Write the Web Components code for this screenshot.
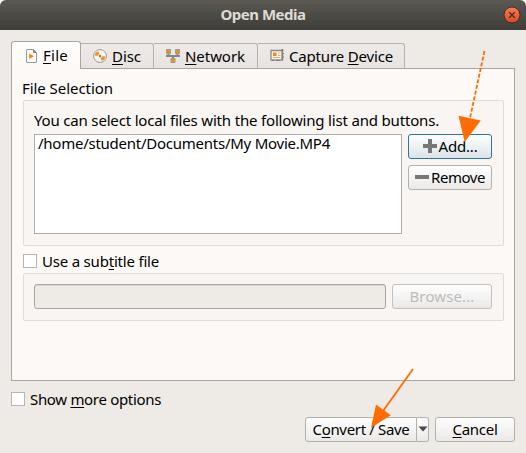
<!DOCTYPE html>
<html lang="en"><head><meta charset="utf-8"><title>Open Media</title>
<style>html,body{margin:0;width:526px;height:453px;overflow:hidden;background:#fff}</style></head>
<body><media-dialog></media-dialog>
<script>
const define=(name,html,init)=>customElements.define(name,class extends HTMLElement{
  connectedCallback(){ if(this.shadowRoot)return; const r=this.attachShadow({mode:'open'}); r.innerHTML=html; if(init)init.call(this,r); }
});

// Label whose letter spacing is adjusted so that it takes the given width.
define('fit-text',`<style>
:host{display:block;flex:none;white-space:pre;height:20px;line-height:20px}
span{display:inline-block;white-space:pre}
::slotted(u){text-decoration:underline;text-decoration-thickness:1px;text-underline-offset:2px;text-decoration-skip-ink:none}
</style><span><slot></slot></span>`,function(r){
  const s=r.querySelector('span'),w=+this.getAttribute('w');
  this.style.width=w+'px';
  const fit=()=>{s.style.letterSpacing='0px';const n=this.textContent.length;s.style.letterSpacing=((w-s.getBoundingClientRect().width)/n)+'px';};
  fit();
});

define('title-bar',`<style>
:host{box-sizing:border-box;height:30px;display:grid;grid-template-columns:1fr auto 1fr;align-items:center;background:linear-gradient(#5b574f,#595750 5%,#3e3d38);border-radius:6px 6px 0 0;color:#dfdbd2;font-weight:700}
svg{justify-self:end;margin-right:5px}
fit-text{grid-column:2;margin-bottom:2px}
</style><fit-text w="85">Open Media</fit-text>
<svg width="18" height="18" viewBox="0 0 18 18"><defs><linearGradient id="g" x2="0" y2="1"><stop stop-color="#f37d57"/><stop offset="1" stop-color="#e0491a"/></linearGradient></defs><circle cx="9" cy="9" r="8" fill="url(#g)" stroke="#35332e"/><path d="M6.3 6.3l5.4 5.4M11.7 6.3l-5.4 5.4" stroke="#45301f" stroke-width="1.3"/></svg>`);

const ICONS={
 file:'<path d="M2 1.5h6.500l3 3v9.500q0 .5-.5.5H2q-.5 0-.5-.5V2q0-.5.5-.5z" fill="#fafafa" stroke="#999"/><path d="M8 1v4h4z" fill="#888"/><path d="M4.200 5.500v5.500L9 8.300z" fill="#f8870c"/>',
 disc:'<circle cx="7" cy="8" r="6.4" fill="#f4f4f4" stroke="#999"/><path d="M7 8L1.800 7.500A5.200 5.200 0 0 1 5.300 3.200zM7 8l5.200.5a5.200 5.200 0 0 1-3.500 4.300z" fill="#f8900c"/><circle cx="7" cy="8" r="2.100" fill="#f4f4f4"/><circle cx="7" cy="8" r="1.200" fill="#777"/>',
 net:'<path d="M0 8h14M2.500 5v3M11.500 5v3M7 8v3" stroke="#858585" stroke-width="2"/><path d="M.5 1.500h4v4h-4zM9.500 1.500h4v4h-4zM5 10.500h4v4H5z" fill="#f8900c" stroke="#999"/>',
 cap:'<path d="M1 2.500h11v9.500H1z" fill="#f8f8f8" stroke="#898989" stroke-width="1.300"/><path d="M11 2h2.500M12.600 1v11.500M12 5.500h2M12 9h2M2 12.500h2M6 12.500h4" stroke="#808080" stroke-width="1.200"/><path d="M3 4.500h3.500V8H3z" fill="#f8870c"/><path d="M8 5h2.500M8 7.500h2.500M3 9.500h7.500" stroke="#f3aa58"/>'
};
define('media-tab',`<style>
:host{box-sizing:border-box;display:flex;align-items:center;height:26px;border:1px solid #b6b3af;border-left:0;border-bottom-color:#a9a5a1;border-radius:0 3px 0 0;background:linear-gradient(#edeae8,#e6e3e1)}
:host([active]){height:28px;border:1px solid #a9a5a1;border-bottom:0;border-radius:3px 3px 0 0;background:linear-gradient(#fff,#fdf9f6);z-index:1}
svg{flex:none;margin-right:5px}
:host([active]) svg{margin-right:4px}
:host([active]) ::slotted(fit-text){margin-bottom:2px}
</style><svg width="14" height="16" viewBox="0 0 14 16"></svg><slot></slot>`,function(r){
 r.querySelector('svg').innerHTML=ICONS[this.getAttribute('icon')];
});

define('push-button',`<style>
:host{box-sizing:border-box;height:25px;display:flex;align-items:center;justify-content:center;border:1px solid #b4b1ad;border-radius:3px;background:linear-gradient(#fefefe,#ebe9e8)}
:host([focus]){border-color:#2e7599;background:linear-gradient(#fdfefe,#dce4e9)}
:host([disabled]){color:#bdbbb9;border-color:#c3c0bd}
::slotted(fit-text){margin-bottom:2px}
::slotted(svg){margin-bottom:1px}
</style><slot></slot>`);

define('check-box',`<style>
:host{display:flex;align-items:center;gap:5px;height:20px}
i{box-sizing:border-box;width:14px;height:14px;border:1px solid #b8b5b0;background:#fff}
</style><i></i><slot></slot>`);

define('group-frame',`<style>
:host{box-sizing:border-box;display:flex;flex-direction:column;border:1px solid #dfdcd9;border-radius:2px;background:#f9f5f2;padding:10px 11px 0 10px}
</style><slot></slot>`);

define('pointer-arrows',`<style>:host{position:absolute;inset:0;pointer-events:none}</style>
<svg width="526" height="453"><g stroke="#ff6c00" stroke-width="1.8"><path d="M484.500 51L470 118" stroke-dasharray="4 1.800"/><path d="M413 369L383 411"/></g><path d="M458.500 115.700L480.700 120.500L464.700 142zM376 404.500L390.800 415.300L371 427.800z" fill="#ff6c00"/></svg>`);

define('media-dialog',`<style>
:host{position:relative;display:flex;flex-direction:column;width:526px;height:453px;background:#eeebe6;border-radius:6px 6px 0 0;font:15px "Noto Sans","Open Sans",sans-serif;color:#000}
.tabs{display:flex;align-items:flex-end;height:29px;padding:10px 11px 0;margin-bottom:-1px}
.panel{box-sizing:border-box;height:313px;margin:0 11px;border:1px solid #a9a5a1;background:#fdf9f6;padding:9px 10px 0 11px;display:flex;flex-direction:column}
.row{display:flex;gap:6px}
.col{display:flex;flex-direction:column;gap:6px;width:84px}
.list{box-sizing:border-box;width:368px;height:100px;border:1px solid #b0aeac;background:#fff;padding:0 3px}
.list fit-text{margin-top:-2px}
.input{box-sizing:border-box;width:352px;height:25px;border:1px solid #aaa7a3;border-radius:3px;background:#eeebe6;box-shadow:inset 0 1px #dbd8d4}
.foot{display:flex;padding:0 11px 0 305px;margin-top:8px}
</style>
<title-bar></title-bar>
<div class="tabs">
<media-tab active icon="file" style="width:70px;padding-left:13px"><fit-text w="25"><u>F</u>ile</fit-text></media-tab>
<media-tab icon="disc" style="width:73px;padding-left:12px"><fit-text w="29"><u>D</u>isc</fit-text></media-tab>
<media-tab icon="net" style="width:104px;padding-left:12px"><fit-text w="60"><u>N</u>etwork</fit-text></media-tab>
<media-tab icon="cap" style="width:147px;padding-left:12px"><fit-text w="104">Capture <u>D</u>evice</fit-text></media-tab>
</div>
<div class="panel">
 <fit-text w="91" style="margin-left:-1px">File Selection</fit-text>
 <group-frame style="height:146px;margin-top:2px;padding-top:9px">
  <fit-text w="405">You can select local files with the following list and buttons.</fit-text>
  <div class="row" style="margin-top:4px"><div class="list"><fit-text w="292">/home/student/Documents/My Movie.MP4</fit-text></div>
  <div class="col">
   <push-button focus><svg width="14" height="14" style="margin-right:2px"><path d="M7 0v14M0 7h14" stroke="#777" stroke-width="4"/></svg><fit-text w="39">Add...</fit-text></push-button>
   <push-button><svg width="14" height="14" style="margin-right:2px"><path d="M0 7h14" stroke="#777" stroke-width="4"/></svg><fit-text w="54">Remove</fit-text></push-button>
  </div></div>
 </group-frame>
 <check-box style="margin:5px 0 2px"><fit-text w="117">Use a sub<u>t</u>itle file</fit-text></check-box>
 <group-frame style="height:48px"><div class="row"><div class="input"></div><push-button disabled style="width:100px"><fit-text w="65">Browse...</fit-text></push-button></div></group-frame>
</div>
<check-box style="margin:8px 0 0 11px"><fit-text w="131">Show <u>m</u>ore options</fit-text></check-box>
<div class="foot">
 <push-button style="width:112px;border-radius:3px 0 0 3px"><fit-text w="97">C<u>o</u>nvert / Save</fit-text></push-button>
 <push-button style="width:12px;border-left:0;border-radius:0 3px 3px 0"><svg width="10" height="6"><path d="M.5 .5h9l-4.500 5z" fill="#484848"/></svg></push-button>
 <push-button style="width:80px;margin-left:6px"><fit-text w="45"><u>C</u>ancel</fit-text></push-button>
</div>
<pointer-arrows></pointer-arrows>`);
</script></body></html>
